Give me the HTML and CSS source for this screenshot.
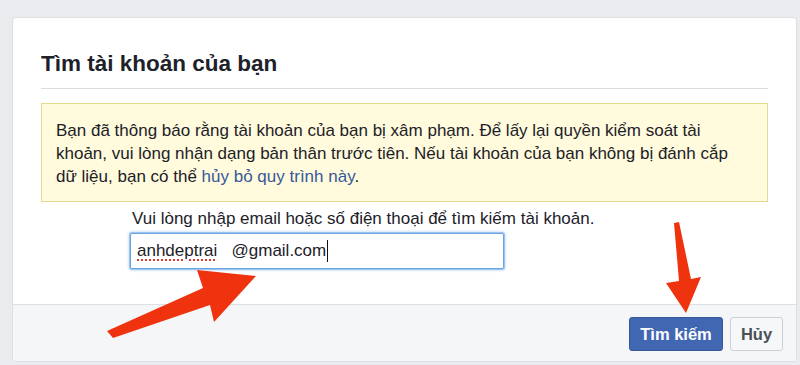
FILE: index.html
```html
<!DOCTYPE html>
<html lang="vi">
<head>
<meta charset="utf-8">
<title>Tìm tài khoản của bạn</title>
<link rel="stylesheet" href="styles.css">
</head>
<body>
<div class="dialog">
  <div class="content">
    <h2 class="title">Tìm tài khoản của bạn</h2>
    <div class="notice">Bạn đã thông báo rằng tài khoản của bạn bị xâm phạm. Để lấy lại quyền kiểm soát tài khoản, vui lòng nhận dạng bản thân trước tiên. Nếu tài khoản của bạn không bị đánh cắp dữ liệu, bạn có thể <a class="link" href="#">hủy bỏ quy trình này</a>.</div>
    <div class="form">
      <div class="label">Vui lòng nhập email hoặc số điện thoại để tìm kiếm tài khoản.</div>
      <div class="input"><span class="misspelled">anhdeptrai</span>   @gmail.com<span class="caret"></span></div>
    </div>
  </div>
  <div class="footer">
    <button class="btn btn-primary">Tìm kiếm</button>
    <button class="btn btn-default">Hủy</button>
  </div>
</div>
<svg class="arrows" width="800" height="365" viewBox="0 0 800 365" xmlns="http://www.w3.org/2000/svg">
  <polygon points="107,331 203,288 197,270 256,276 214,322 210,305 113,338" fill="#f0330f"/>
  <polygon points="674,223 679,222 691,279 701,277 686,313 666,283 679,281" fill="#f0330f"/>
</svg>
</body>
</html>
```

FILE: styles.css
```css
html, body {
  margin: 0;
  padding: 0;
}
body {
  background: #e9ebee;
  font-family: "Liberation Sans", Arial, sans-serif;
  color: #1d2129;
  width: 800px;
  height: 365px;
  overflow: hidden;
  position: relative;
}
.dialog {
  margin: 17px 3px 0 12px;
  height: 345px;
  box-sizing: border-box;
  background: #fff;
  border: 1px solid #dddfe2;
  border-radius: 4px;
  display: flex;
  flex-direction: column;
  overflow: hidden;
}
.content {
  flex: 1;
  padding: 0 28px;
}
.title {
  margin: 0;
  padding: 33px 0 11px;
  font-size: 22.5px;
  line-height: 26px;
  font-weight: bold;
  color: #1d2129;
  border-bottom: 1px solid #dadde1;
}
.notice {
  margin-top: 14px;
  background: #fffbdc;
  border: 1px solid #e3da8f;
  padding: 15px 14px 13px;
  font-size: 17px;
  line-height: 23px;
}
.link {
  color: #385898;
  text-decoration: none;
}
.form {
  margin-left: 89px;
  padding-top: 7px;
}
.label {
  font-size: 17px;
  line-height: 20px;
  padding-left: 2px;
}
.input {
  margin-top: 4px;
  width: 374px;
  height: 36px;
  box-sizing: border-box;
  border: 1px solid #6aa4e0;
  box-shadow: 0 0 0 1px #9cc4ee, 0 0 3px 1px #a9ccf0;
  border-radius: 2px;
  padding: 0 6px;
  font-size: 17px;
  line-height: 34px;
  white-space: pre;
  display: flex;
  align-items: center;
}
.misspelled {
  text-decoration: underline dotted #e0392f;
  text-decoration-thickness: 2px;
  text-underline-offset: 3px;
}
.caret {
  display: inline-block;
  width: 1px;
  height: 22px;
  background: #111;
  margin-left: 1px;
}
.footer {
  height: 57px;
  box-sizing: border-box;
  background: #f5f6f7;
  border-top: 1px solid #dddfe2;
  display: flex;
  justify-content: flex-end;
  align-items: flex-start;
  gap: 7px;
  padding: 12px 13px 0 0;
}
.btn {
  height: 34px;
  box-sizing: border-box;
  border-radius: 3px;
  font-family: "Liberation Sans", Arial, sans-serif;
  font-size: 16.5px;
  font-weight: bold;
  padding: 0;
  margin: 0;
}
.btn-primary {
  background: #4267b2;
  border: 1px solid #365899;
  color: #fff;
  width: 94px;
}
.btn-default {
  background: #f6f7f9;
  border: 1px solid #ced0d4;
  color: #4b4f56;
  width: 53px;
}
.arrows {
  position: absolute;
  left: 0;
  top: 0;
  pointer-events: none;
}
```
